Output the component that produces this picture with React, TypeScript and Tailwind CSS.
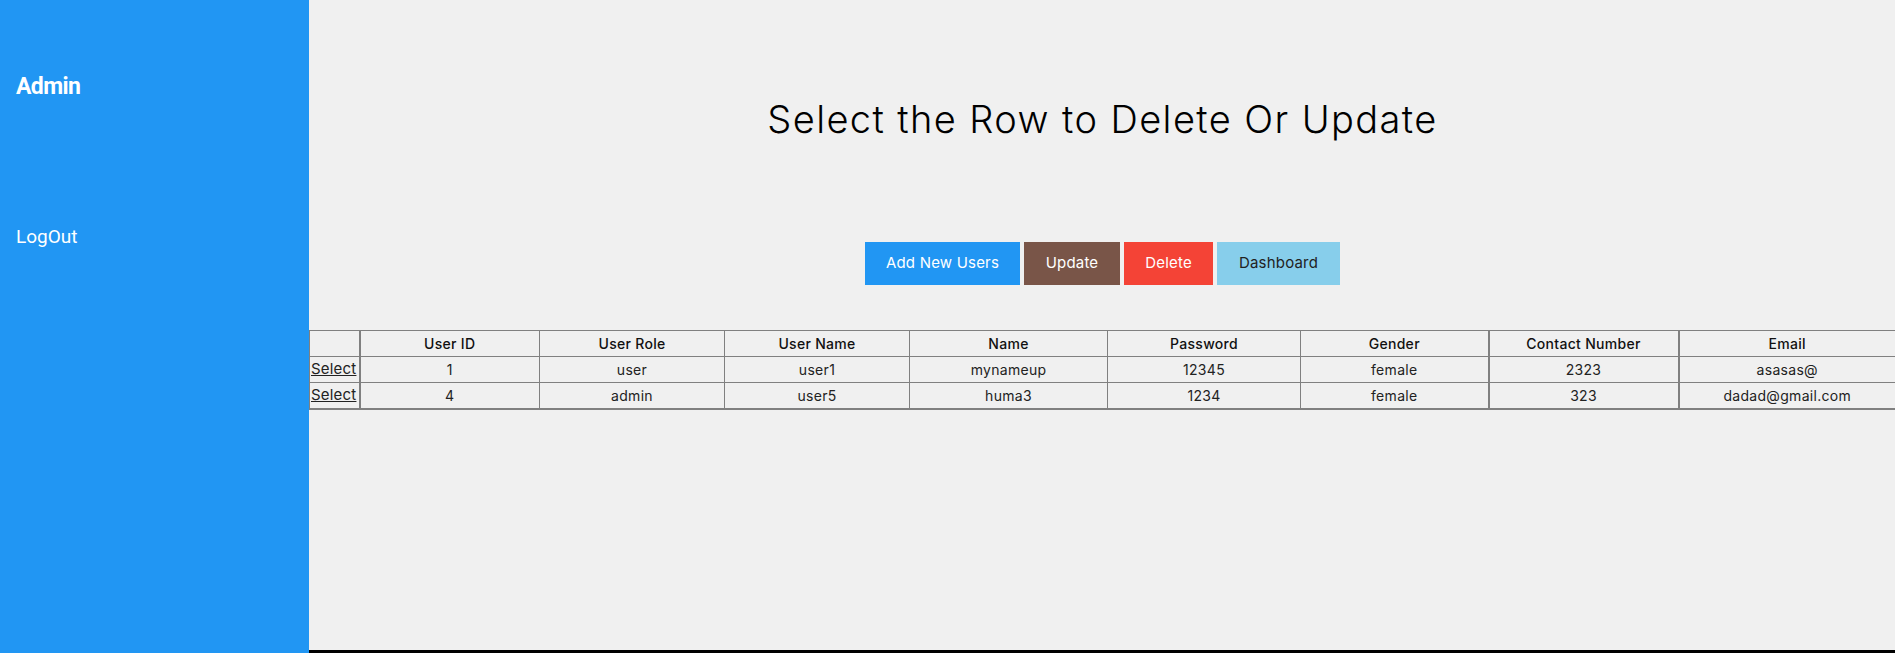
import React from "react";

const rows = [
  ["1", "user", "user1", "mynameup", "12345", "female", "2323", "asasas@"],
  ["4", "admin", "user5", "huma3", "1234", "female", "323", "dadad@gmail.com"],
];

const headers = ["User ID", "User Role", "User Name", "Name", "Password", "Gender", "Contact Number", "Email"];
const thickLeft = [true, false, false, false, false, false, true, true];

export default function App() {
  return (
    <div className="flex h-[653px] w-full overflow-hidden">
      <aside className="w-[309px] shrink-0 bg-[#2196F3] text-white" style={{ fontFamily: "Roboto, sans-serif" }}>
        <div className="pl-[16px] pt-[74px] text-[23px] font-bold leading-[26px] tracking-[-0.6px]">Admin</div>
        <div className="pl-[16px] mt-[126px] text-[19px] leading-[22px]">LogOut</div>
      </aside>
      <main
        className="flex flex-1 flex-col border-b-[3px] border-black bg-[#f0f0f0] text-[#111]"
        style={{ fontFamily: "Inter, 'Open Sans', sans-serif" }}
      >
        <h1 className="mt-[96px] text-center text-[38px] font-light leading-[46px] tracking-[1.4px] text-black">
          Select the Row to Delete Or Update
        </h1>
        <div className="mt-[100px] flex justify-center gap-[4px] text-[15px] tracking-[0.2px]">
          <button className="h-[43px] w-[155px] bg-[#2196F3] text-white">Add New Users</button>
          <button className="h-[43px] w-[96px] bg-[#795548] text-white">Update</button>
          <button className="h-[43px] w-[89px] bg-[#f44336] text-white">Delete</button>
          <button className="h-[43px] w-[123px] bg-[#87CEEB] text-[#222]">Dashboard</button>
        </div>
        <table className="mt-[45px] w-full table-fixed border-collapse border border-b-2 border-[#808080] text-[14px] tracking-[0.3px]">
          <colgroup>
            <col className="w-[50px]" />
            <col className="w-[180px]" />
            <col className="w-[185px]" />
            <col className="w-[185px]" />
            <col className="w-[198px]" />
            <col className="w-[193px]" />
            <col className="w-[188px]" />
            <col className="w-[190px]" />
            <col className="w-[217px]" />
          </colgroup>
          <thead>
            <tr>
              <th className="h-[26px] border border-[#808080] p-0"></th>
              {headers.map((h, i) => (
                <th
                  key={h}
                  className={
                    thickLeft[i]
                      ? "h-[26px] border border-l-2 border-[#808080] p-0 font-medium text-[#111]"
                      : "h-[26px] border border-[#808080] p-0 font-medium text-[#111]"
                  }
                >
                  {h}
                </th>
              ))}
            </tr>
          </thead>
          <tbody>
            {rows.map((r) => (
              <tr key={r[0]}>
                <td className="h-[26px] border border-[#808080] p-0 pl-[1px] text-left">
                  <a href="#" className="text-[15px] tracking-[0.2px] text-[#222] underline">Select</a>
                </td>
                {r.map((c, i) => (
                  <td
                    key={i}
                    className={
                      thickLeft[i]
                        ? "h-[26px] border border-l-2 border-[#808080] p-0 text-center font-normal text-[#222]"
                        : "h-[26px] border border-[#808080] p-0 text-center font-normal text-[#222]"
                    }
                  >
                    {c}
                  </td>
                ))}
              </tr>
            ))}
          </tbody>
        </table>
        <div className="flex-1" />
      </main>
    </div>
  );
}
